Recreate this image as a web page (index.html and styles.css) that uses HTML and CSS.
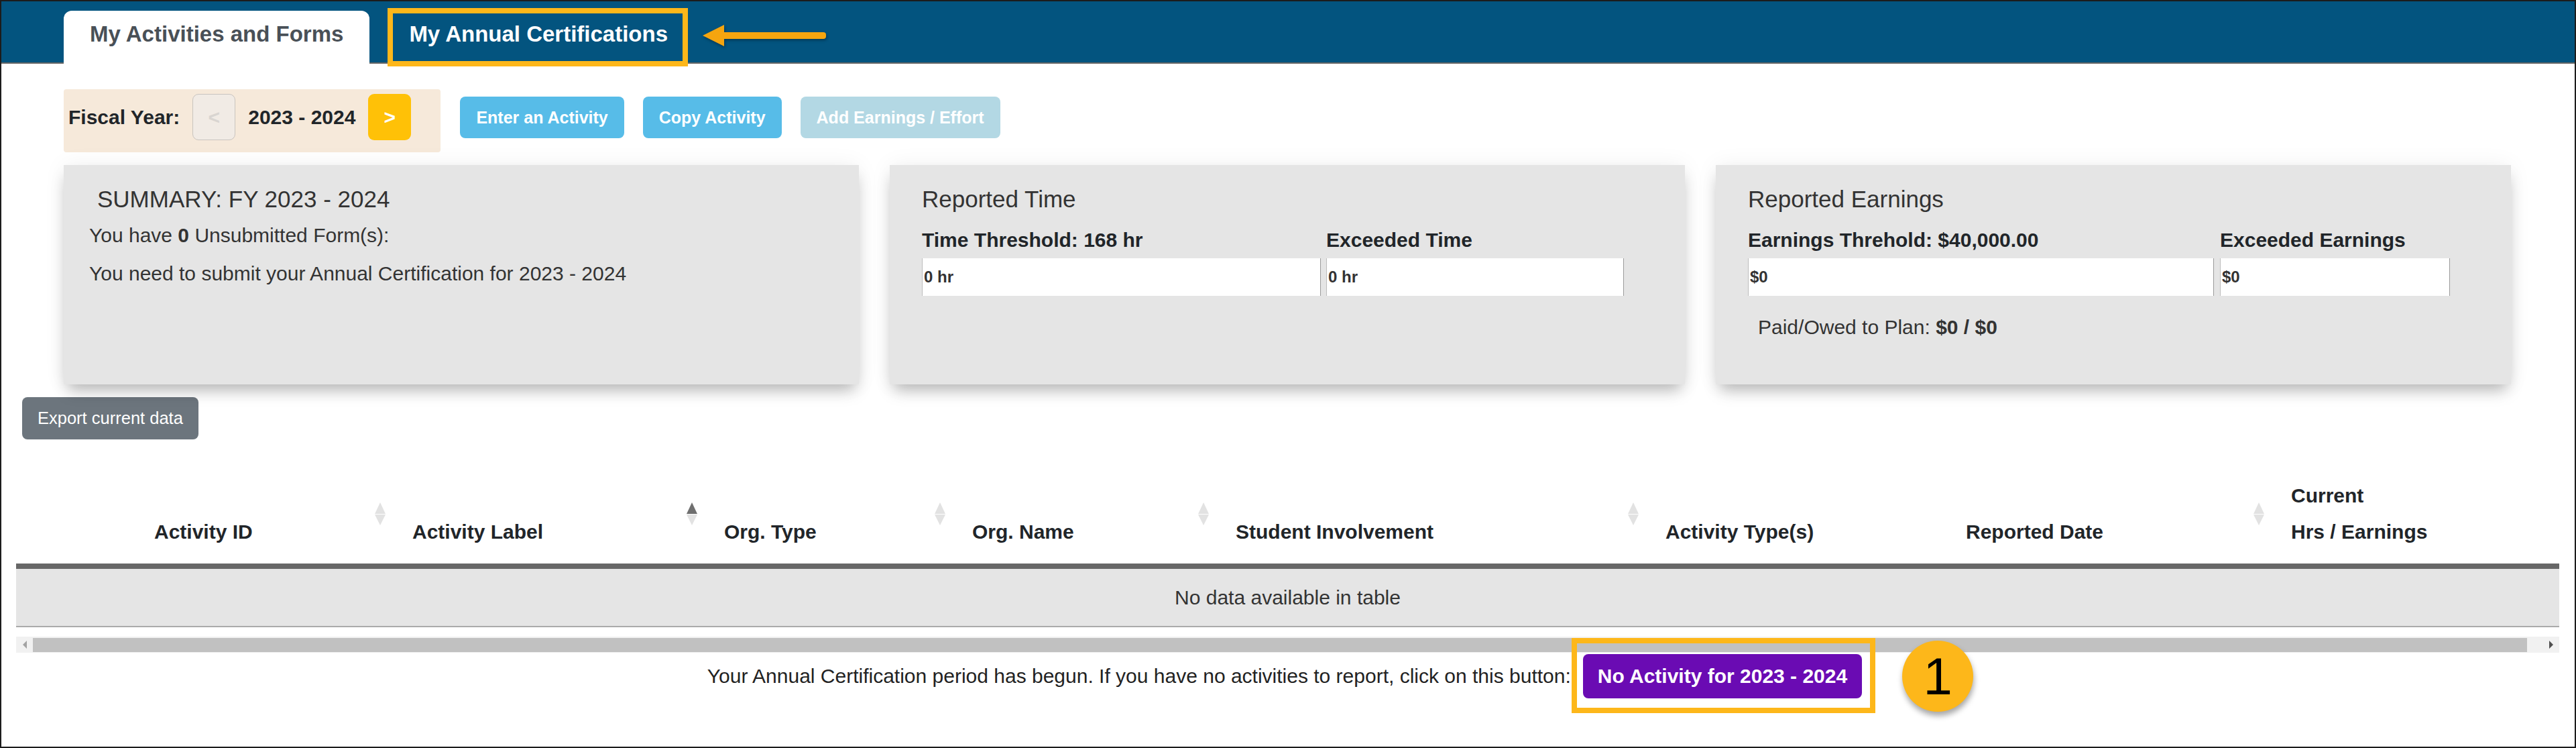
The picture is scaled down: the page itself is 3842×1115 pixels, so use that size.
FILE: index.html
```html
<!DOCTYPE html>
<html lang="en">
<head>
    <meta charset="UTF-8">
    <title>My Activities and Forms</title>
    <link rel="stylesheet" href="styles.css">
</head>
<body>
    <div class="frame">
        <header class="topbar">
            <nav class="tabs">
                <a class="tab active" href="#">My Activities and Forms</a>
                <a class="tab" href="#">My Annual Certifications<span class="callout"></span></a>
                <svg class="pointer" width="186" height="34" viewBox="0 0 186 34">
                    <rect x="26" y="12" width="158" height="10" rx="4" fill="#f5a50f"/>
                    <polygon points="0,17 32,1 32,33" fill="#f5a50f"/>
                </svg>
            </nav>
        </header>

        <div class="toolbar">
            <div class="fiscal">
                <span class="fiscal-label">Fiscal Year:</span>
                <button class="year-btn prev">&lt;</button>
                <span class="fiscal-year">2023 - 2024</span>
                <button class="year-btn next">&gt;</button>
            </div>
            <button class="btn">Enter an Activity</button>
            <button class="btn">Copy Activity</button>
            <button class="btn disabled">Add Earnings / Effort</button>
        </div>

        <div class="cards">
            <div class="card summary">
                <h2 class="card-title">SUMMARY: FY 2023 - 2024</h2>
                <p>You have <b>0</b> Unsubmitted Form(s):</p>
                <p>You need to submit your Annual Certification for 2023 - 2024</p>
            </div>
            <div class="card">
                <h2 class="card-title">Reported Time</h2>
                <div class="stat-grid time">
                    <div class="stat-label">Time Threshold: 168 hr</div>
                    <div class="stat-label">Exceeded Time</div>
                    <div class="stat-value">0 hr</div>
                    <div class="stat-value">0 hr</div>
                </div>
            </div>
            <div class="card">
                <h2 class="card-title">Reported Earnings</h2>
                <div class="stat-grid earnings">
                    <div class="stat-label">Earnings Threhold: $40,000.00</div>
                    <div class="stat-label">Exceeded Earnings</div>
                    <div class="stat-value">$0</div>
                    <div class="stat-value">$0</div>
                </div>
                <p class="paid">Paid/Owed to Plan: <b>$0 / $0</b></p>
            </div>
        </div>

        <button class="btn-export">Export current data</button>

        <div class="table-wrap">
            <table class="activities">
                <colgroup>
                    <col class="c0"><col class="c1"><col class="c2"><col class="c3"><col class="c4">
                    <col class="c5"><col class="c6"><col class="c7"><col class="c8">
                </colgroup>
                <thead>
                    <tr>
                        <th></th>
                        <th class="sorting">Activity ID</th>
                        <th class="sorting asc">Activity Label</th>
                        <th class="sorting">Org. Type</th>
                        <th class="sorting">Org. Name</th>
                        <th class="sorting">Student Involvement</th>
                        <th>Activity Type(s)</th>
                        <th class="sorting">Reported Date</th>
                        <th>Current<br>Hrs / Earnings</th>
                    </tr>
                </thead>
                <tbody>
                    <tr>
                        <td class="empty" colspan="9">No data available in table</td>
                    </tr>
                </tbody>
            </table>
            <div class="hscroll">
                <span class="arrow left"></span>
                <span class="thumb"></span>
                <span class="arrow right"></span>
            </div>
        </div>

        <div class="cert-note">
            <span>Your Annual Certification period has begun. If you have no activities to report, click on this button:</span>
            <span class="marked">
                <button class="btn-none">No Activity for 2023 - 2024</button>
                <span class="callout"></span>
                <span class="step-badge">1</span>
            </span>
        </div>
    </div>
</body>
</html>
```

FILE: styles.css
```css
* {
    box-sizing: border-box;
}

html, body {
    margin: 0;
}

body {
    font-family: "Liberation Sans", Arial, sans-serif;
    color: #333;
    background: #fff;
}

button {
    font-family: inherit;
    cursor: pointer;
}

.frame {
    width: 3842px;
    height: 1115px;
    border: 2px solid #1c1c1c;
    overflow: hidden;
}

/* header + tabs */
.topbar {
    height: 93px;
    background: #03547f;
    border-bottom: 2px solid #666;
    padding: 14px 0 0 93px;
}

.tabs {
    display: flex;
    align-items: flex-start;
}

.tab {
    position: relative;
    height: 79px;
    padding: 15px 39px 0;
    font-size: 33px;
    font-weight: bold;
    line-height: 40px;
    color: #fff;
    text-decoration: none;
    border-radius: 12px 12px 0 0;
}

.tab.active {
    background: #fff;
    color: #495057;
}

.tab + .tab {
    margin-left: 20px;
}

.callout {
    position: absolute;
    border: 8px solid #fdb71a;
    pointer-events: none;
}

.tab .callout {
    left: 7px;
    right: 9px;
    top: -4px;
    bottom: -4px;
}

.pointer {
    margin: 20px 0 0 13px;
    filter: drop-shadow(1px 2px 2px rgba(0, 0, 0, 0.35));
}

/* fiscal year + actions */
.toolbar {
    display: flex;
    align-items: flex-start;
    margin: 38px 95px 0 93px;
}

.fiscal {
    display: flex;
    align-items: center;
    gap: 19px;
    background: #f6e9da;
    padding: 7px 44px 18px 7px;
    border-radius: 4px;
    font-size: 30px;
    font-weight: bold;
    color: #212529;
}

.year-btn {
    width: 64px;
    height: 69px;
    padding: 0;
    border-radius: 9px;
    font-size: 30px;
    font-weight: bold;
    line-height: 1;
}

.year-btn.prev {
    background: #f1ebe5;
    border: 1px solid #c9c4bf;
    color: #d9d5d1;
}

.year-btn.next {
    background: #ffc107;
    border: 0;
    color: #fff;
}

.btn {
    height: 62px;
    margin: 11px 0 0 28px;
    padding: 0 24px;
    border: 0;
    border-radius: 8px;
    background: #57bce8;
    color: #fff;
    font-size: 25px;
    font-weight: bold;
}

.fiscal + .btn {
    margin-left: 29px;
}

.btn.disabled {
    background: #b3d8e4;
    cursor: default;
}

/* summary cards */
.cards {
    display: grid;
    grid-template-columns: repeat(3, 1fr);
    gap: 46px;
    margin: 19px 95px 0 93px;
}

.card {
    height: 327px;
    background: #e5e5e5;
    padding: 30px 40px 0 48px;
    box-shadow: 0 14px 22px -6px rgba(0, 0, 0, 0.28), 0 0 32px rgba(0, 0, 0, 0.06);
}

.card-title {
    margin: 0;
    font-size: 35px;
    font-weight: normal;
    line-height: 42px;
    color: #333;
}

.card.summary {
    padding-left: 38px;
}

.card.summary .card-title {
    padding-left: 12px;
}

.card p {
    margin: 0 0 12px;
    font-size: 30px;
    line-height: 45px;
}

.card.summary .card-title + p {
    margin-top: 10px;
}

.stat-grid {
    display: grid;
    column-gap: 8px;
    row-gap: 9px;
    margin-top: 22px;
}

.stat-grid.time {
    grid-template-columns: 595px 444px;
}

.stat-grid.earnings {
    grid-template-columns: 695px 343px;
    column-gap: 9px;
}

.stat-label {
    font-size: 30px;
    font-weight: bold;
    line-height: 36px;
    color: #212529;
}

.stat-value {
    display: flex;
    align-items: center;
    height: 56px;
    padding-left: 2px;
    background: #fff;
    border-left: 1px solid #bdbdbd;
    border-right: 1px solid #9a9a9a;
    font-size: 24px;
    font-weight: bold;
    color: #333;
}

.card p.paid {
    margin-top: 29px;
    padding-left: 15px;
    line-height: 36px;
}

/* export */
.btn-export {
    display: block;
    height: 63px;
    margin: 19px 0 0 31px;
    padding: 0 23px;
    border: 0;
    border-radius: 8px;
    background: #6c757d;
    color: #fff;
    font-size: 25.5px;
}

/* table */
.table-wrap {
    margin: 45px 23px 0 22px;
}

.activities {
    width: 100%;
    border-collapse: collapse;
    table-layout: fixed;
}

.c0 { width: 169px; }
.c1 { width: 385px; }
.c2 { width: 465px; }
.c3 { width: 370px; }
.c4 { width: 393px; }
.c5 { width: 641px; }
.c6 { width: 448px; }
.c7 { width: 485px; }

.activities th {
    position: relative;
    padding: 12px 0 20px 37px;
    font-size: 30px;
    font-weight: bold;
    line-height: 54px;
    text-align: left;
    vertical-align: bottom;
    color: #212529;
    border-bottom: 8px solid #676767;
}

.sorting::before,
.sorting::after {
    content: "";
    position: absolute;
    right: 3px;
    width: 0;
    height: 0;
    border-left: 8px solid transparent;
    border-right: 8px solid transparent;
}

.sorting::before {
    top: 49px;
    border-bottom: 17px solid #e2e2e2;
}

.sorting::after {
    top: 67px;
    border-top: 16px solid #e2e2e2;
}

.sorting.asc::before {
    border-bottom-color: #6f6f6f;
}

.activities td.empty {
    padding: 20px 0;
    background: #e5e5e5;
    border-bottom: 2px solid #aaa;
    font-size: 30px;
    line-height: 45px;
    text-align: center;
    color: #333;
}

.hscroll {
    display: flex;
    align-items: center;
    height: 24px;
    margin-top: 14px;
    background: #f1f1f1;
}

.hscroll .thumb {
    flex: 1;
    height: 21px;
    margin-right: 23px;
    background: #c1c1c1;
}

.hscroll .arrow {
    display: flex;
    justify-content: center;
    width: 25px;
}

.hscroll .arrow::before {
    content: "";
    border-top: 6px solid transparent;
    border-bottom: 6px solid transparent;
}

.hscroll .arrow.left::before {
    border-right: 6px solid #a3a3a3;
}

.hscroll .arrow.right::before {
    border-left: 6px solid #505050;
}

/* certification note */
.cert-note {
    display: flex;
    justify-content: center;
    align-items: center;
    gap: 18px;
    margin-top: 2px;
    padding-right: 10px;
    font-size: 30px;
    color: #222;
}

.marked {
    position: relative;
}

.btn-none {
    display: block;
    padding: 15px 22px;
    border: 0;
    border-radius: 8px;
    background: #6a0bb3;
    color: #fff;
    font-size: 30px;
    font-weight: bold;
    line-height: 36px;
}

.marked .callout {
    left: -17px;
    right: -20px;
    top: -24px;
    bottom: -22px;
}

.step-badge {
    position: absolute;
    left: calc(100% + 60px);
    top: 50%;
    width: 106px;
    height: 106px;
    margin-top: -53px;
    display: flex;
    justify-content: center;
    align-items: center;
    border-radius: 50%;
    background: #fdb71a;
    color: #000;
    font-size: 78px;
    box-shadow: 1px 6px 8px rgba(0, 0, 0, 0.35);
}
```
